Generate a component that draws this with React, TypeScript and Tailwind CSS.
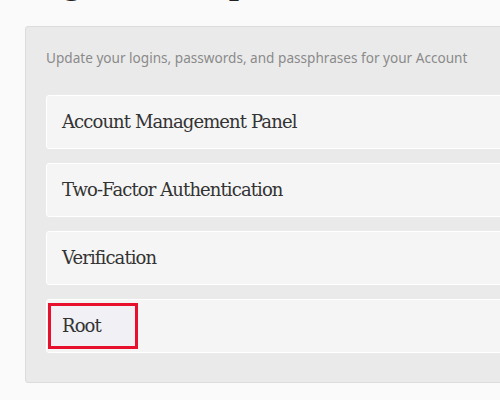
import React from "react";

const items = ["Account Management Panel", "Two-Factor Authentication", "Verification"];
const serif = { fontFamily: '"DejaVu Serif", serif', letterSpacing: "-0.9px" };

export default function App() {
  return (
    <div className="w-[500px] h-[400px] overflow-hidden bg-[#fafafa]">
      <div className="h-[26px] overflow-hidden relative">
        <div className="absolute left-[25px] top-[-28px] text-[28px] font-bold text-[#222] leading-none" style={{ fontFamily: '"DejaVu Serif", serif' }}>
          Login &amp; Passphrases
        </div>
      </div>
      <div className="ml-[25px] w-[520px] h-[357px] bg-[#eaeaea] border border-[#dcdcdc] rounded-[3px] pl-[20px] pt-[20px]">
        <p className="text-[13.6px] text-[#8a8a8a] h-[48px] pt-[1px]" style={{ fontFamily: '"Noto Sans", sans-serif' }}>
          Update your logins, passwords, and passphrases for your Account
        </p>
        <div className="flex flex-col gap-[14px]">
          {items.map((t) => (
            <div key={t} className="h-[54px] bg-[#f5f5f5] border border-white rounded-[3px] flex items-center pl-[15px] pb-[2px] text-[18px] text-[#333]" style={serif}>
              {t}
            </div>
          ))}
          <div className="h-[54px] bg-[#f5f5f5] border border-white rounded-[3px] flex items-center pl-[1px] text-[18px] text-[#333]" style={serif}>
            <div className="w-[90px] h-[46px] border-[3px] border-[#e8112d] bg-[#f0f0f5] flex items-center pl-[11px] pb-[2px]">Root</div>
          </div>
        </div>
      </div>
    </div>
  );
}
